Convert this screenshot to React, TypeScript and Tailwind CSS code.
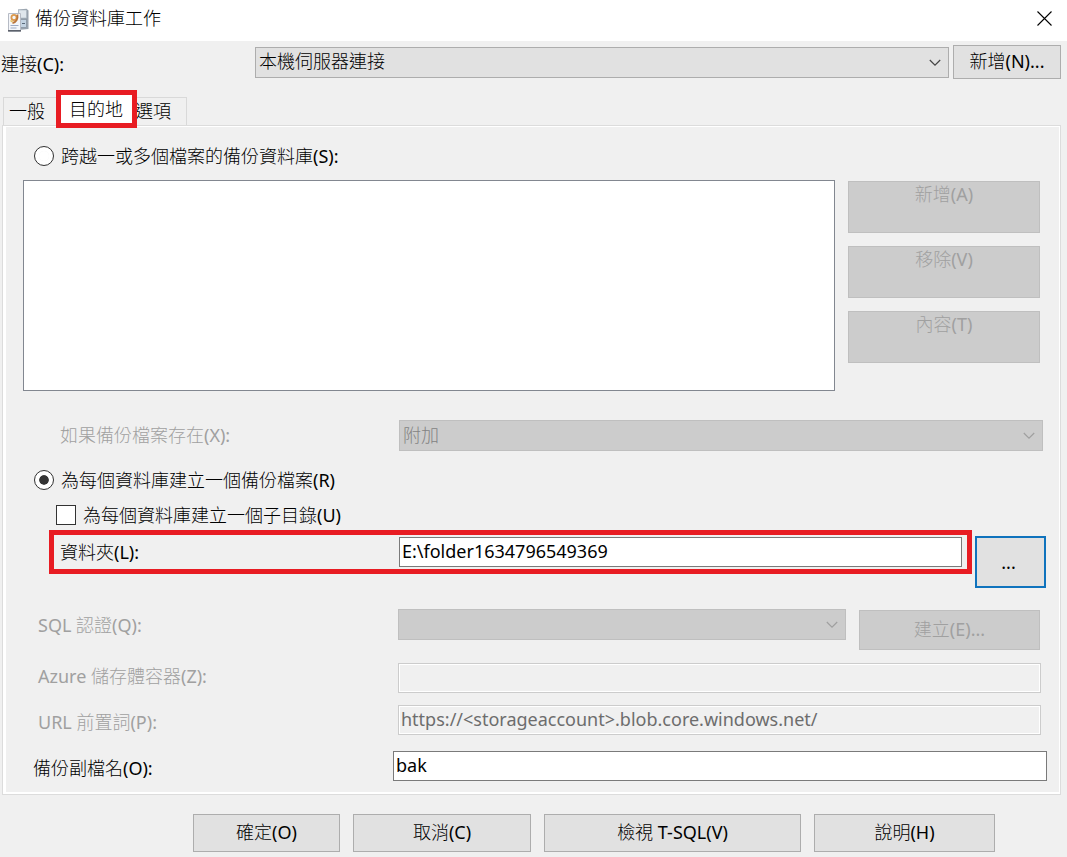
import { useState } from 'react';
import type { ButtonHTMLAttributes, InputHTMLAttributes, SelectHTMLAttributes } from 'react';
import { clsx } from 'clsx';

const TABS = [
  { id: 'general', label: '一般' },
  { id: 'destination', label: '目的地' },
  { id: 'options', label: '選項' },
];

const FILE_ACTIONS = ['新增(A)', '移除(V)', '內容(T)'];

const FOOTER_BUTTONS = [
  { label: '確定(O)', width: 'w-[147px]' },
  { label: '取消(C)', width: 'w-[178px]' },
  { label: '檢視 T-SQL(V)', width: 'w-[257px]' },
  { label: '說明(H)', width: 'w-[181px]' },
];

interface ButtonProps extends ButtonHTMLAttributes<HTMLButtonElement> {
  focused?: boolean;
}

function Button({ className, focused, ...props }: ButtonProps) {
  return (
    <button
      type="button"
      className={clsx(
        'flex shrink-0 justify-center bg-[#e1e1e1] disabled:border-[#bfbfbf] disabled:bg-[#cccccc] disabled:text-[#a0a0a0]',
        focused ? 'border-2 border-[#0f73bd]' : 'border border-[#adadad]',
        className
      )}
      {...props}
    />
  );
}

function Select({ className, children, ...props }: SelectHTMLAttributes<HTMLSelectElement>) {
  return (
    <div className={clsx('relative h-[31px]', className)}>
      <select
        className="peer block h-full w-full appearance-none rounded-none border border-[#adadad] bg-[#e1e1e1] px-[3px] pb-[2px] leading-6 disabled:border-[#bfbfbf] disabled:bg-[#cccccc] disabled:text-[#838383] disabled:opacity-100"
        {...props}
      >
        {children}
      </select>
      <svg
        viewBox="0 0 12 8"
        className="pointer-events-none absolute top-3 right-2 h-2 w-3 text-[#444444] peer-disabled:text-[#a0a0a0]"
        fill="none"
        stroke="currentColor"
        strokeWidth="1.2"
      >
        <path d="M0.8 1 L6 6.2 L11.2 1" />
      </svg>
    </div>
  );
}

function TextInput({ className, ...props }: InputHTMLAttributes<HTMLInputElement>) {
  return (
    <input
      type="text"
      className={clsx(
        'h-[30px] min-w-0 flex-1 border border-[#7a7a7a] bg-white px-[2px] pb-[2px] disabled:border-[#cccccc] disabled:bg-[#f0f0f0] disabled:text-[#6d6d6d] disabled:inset-ring-1 disabled:inset-ring-white',
        className
      )}
      {...props}
    />
  );
}

function JobIcon() {
  return (
    <svg viewBox="0 0 22 24" className="mb-[2px] h-6 w-[22px]" fill="none">
      <path d="M11 1.5 L19.5 0.8 L21.5 2.5 V21 L11 22 Z" fill="#98a2ad" />
      <rect x="11.5" y="2" width="8" height="8" fill="#dfe6ec" stroke="#a9b4be" strokeWidth="0.6" />
      <rect x="13" y="11.5" width="6.5" height="8" fill="#c3d3e2" stroke="#7c8894" strokeWidth="0.6" />
      <path d="M15 15.5 h3" stroke="#5a6a7a" />
      <path d="M1.5 5.5 H13.5 V23 H1.5 Z" fill="#f4f6fa" stroke="#b6bbc5" />
      <rect x="1" y="22" width="13" height="1.6" fill="#5c616b" />
      <path d="M3.5 17.5 h8 M3.5 20 h6" stroke="#9dabc5" />
      <circle cx="7" cy="9.5" r="2.6" stroke="#dc9a4c" strokeWidth="1.8" />
      <path d="M10.4 6.5 C11.2 11 9 14.5 5.5 15" stroke="#b9743a" strokeWidth="1.8" />
      <path d="M3.5 12.5 l2 1.5" stroke="#e8c05a" strokeWidth="1.5" />
    </svg>
  );
}

export default function App() {
  const [activeTab, setActiveTab] = useState('destination');
  const [mode, setMode] = useState('perDatabase');
  const [subDirectory, setSubDirectory] = useState(false);
  const [folder, setFolder] = useState('E:\\folder1634796549369');
  const [extension, setExtension] = useState('bak');

  return (
    <div className="flex min-h-screen flex-col bg-[#f0f0f0] pb-[5px] font-['Noto_Sans','Noto_Sans_CJK_TC_Light','Noto_Sans_CJK_TC',sans-serif] text-lg leading-6 text-black">
      <header className="flex h-[41px] items-center bg-white pr-[14px] pl-[7px]">
        <JobIcon />
        <h1 className="ml-[6px] flex-1 pb-[6px]">備份資料庫工作</h1>
        <button type="button" aria-label="關閉" className="mb-1 p-px">
          <svg viewBox="0 0 15 15" className="size-[15px]" stroke="#000000" strokeWidth="1.1">
            <path d="M0.5 0.5 L14.5 14.5 M14.5 0.5 L0.5 14.5" />
          </svg>
        </button>
      </header>

      <div className="flex items-center gap-1 pt-1 pr-[6px] pl-px">
        <label htmlFor="connection" className="w-[250px] pt-1">連接(C):</label>
        <Select id="connection" className="flex-1">
          <option>本機伺服器連接</option>
        </Select>
        <Button className="h-[34px] w-[108px] items-center pb-[2px]">新增(N)...</Button>
      </div>

      <div role="tablist" className="mt-[11px] flex items-end pl-[3px]">
        {TABS.map((tab) => (
          <button
            key={tab.id}
            type="button"
            role="tab"
            aria-selected={activeTab === tab.id}
            onClick={() => setActiveTab(tab.id)}
            className={clsx(
              'text-left',
              activeTab === tab.id
                ? 'relative z-10 -mb-[3px] h-[38px] w-[81px] border-5 border-[#e81c23] bg-white pl-2'
                : 'h-7 border-t border-[#d9d9d9] pb-[2px]',
              activeTab !== tab.id && (tab.id === 'general' ? 'w-[53px] border-l pl-[5px]' : '-ml-[2px] w-[52px] border-r')
            )}
          >
            {tab.label}
          </button>
        ))}
      </div>

      <main className="mr-[6px] ml-[2px] border border-[#dcdcdc]">
        <div className="border border-b-2 border-l-3 border-white pt-[19px] pb-[11px]">
          <label className="ml-7 flex h-5 items-center gap-[7px]">
            <input
              type="radio"
              name="mode"
              checked={mode === 'acrossFiles'}
              onChange={() => setMode('acrossFiles')}
              className="size-5 appearance-none rounded-full border border-[#333333] bg-white bg-clip-content p-[4px] inset-ring-4 inset-ring-white checked:bg-[#333333]"
            />
            跨越一或多個檔案的備份資料庫(S):
          </label>

          <div className="mt-[14px] mr-[19px] ml-[17px] flex gap-[13px]">
            <select
              multiple
              aria-label="備份檔案"
              className="h-[211px] flex-1 appearance-none rounded-none border border-[#828790] bg-white"
            />
            <div className="flex w-[192px] flex-col gap-[13px] pt-px">
              {FILE_ACTIONS.map((label) => (
                <Button key={label} disabled className="h-[52px]">{label}</Button>
              ))}
            </div>
          </div>

          <div className="mt-[29px] mr-4 ml-[54px] flex items-center text-[#a0a0a0]">
            <label htmlFor="if-exists" className="w-[339px] pb-[2px]">如果備份檔案存在(X):</label>
            <Select id="if-exists" className="flex-1" disabled>
              <option>附加</option>
            </Select>
          </div>

          <label className="mt-[19px] ml-7 flex h-5 items-center gap-[7px]">
            <input
              type="radio"
              name="mode"
              checked={mode === 'perDatabase'}
              onChange={() => setMode('perDatabase')}
              className="size-5 appearance-none rounded-full border border-[#333333] bg-white bg-clip-content p-[4px] inset-ring-4 inset-ring-white checked:bg-[#333333]"
            />
            為每個資料庫建立一個備份檔案(R)
          </label>
          <label className="mt-[15px] ml-[50px] flex h-5 items-center gap-[7px]">
            <input
              type="checkbox"
              checked={subDirectory}
              onChange={(e) => setSubDirectory(e.target.checked)}
              className="size-5 appearance-none border border-[#333333] bg-white checked:bg-[#333333]"
            />
            為每個資料庫建立一個子目錄(U)
          </label>

          <div className="mt-[5px] mr-[13px] ml-[43px] flex items-start gap-[3px]">
            <div className="flex h-11 flex-1 items-center border-5 border-[#e81c23] pr-[5px] pl-[6px]">
              <label htmlFor="folder" className="w-[339px]">資料夾(L):</label>
              <TextInput id="folder" value={folder} onChange={(e) => setFolder(e.target.value)} />
            </div>
            <Button focused className="mt-[6px] h-[52px] w-[71px] items-center pr-1">...</Button>
          </div>

          <div className="mt-[21px] mr-[19px] ml-8 flex items-start text-[#a0a0a0]">
            <label htmlFor="credential" className="w-[360px] pt-1">SQL 認證(Q):</label>
            <Select id="credential" className="flex-1" disabled />
            <Button disabled className="mt-px ml-[13px] h-10 w-[181px] items-center pb-[2px]">建立(E)...</Button>
          </div>

          <div className="mt-[13px] mr-[18px] ml-8 flex items-center text-[#a0a0a0]">
            <label htmlFor="container" className="w-[360px] pb-1">Azure 儲存體容器(Z):</label>
            <TextInput id="container" disabled />
          </div>
          <div className="mt-3 mr-[18px] ml-8 flex items-center text-[#a0a0a0]">
            <label htmlFor="url-prefix" className="w-[360px] pt-1">URL 前置詞(P):</label>
            <TextInput id="url-prefix" disabled value="https://<storageaccount>.blob.core.windows.net/" />
          </div>
          <div className="mt-4 mr-3 ml-[27px] flex items-center">
            <label htmlFor="extension" className="w-[360px] pt-1">備份副檔名(O):</label>
            <TextInput id="extension" value={extension} onChange={(e) => setExtension(e.target.value)} />
          </div>
        </div>
      </main>

      <footer className="mt-[19px] flex justify-end gap-[13px] pr-[72px]">
        {FOOTER_BUTTONS.map(({ label, width }) => (
          <Button key={label} className={clsx('h-[38px] items-center pb-[2px]', width)}>{label}</Button>
        ))}
      </footer>
    </div>
  );
}
